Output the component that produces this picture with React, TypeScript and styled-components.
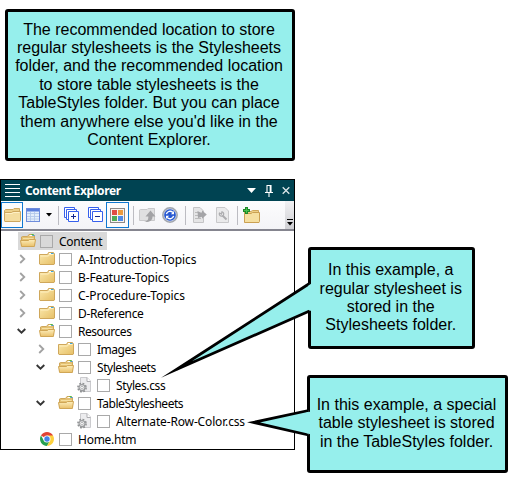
import React from "react";
import styled, { createGlobalStyle } from "styled-components";

const GlobalStyle = createGlobalStyle`
  * { box-sizing: border-box; }
  body { margin: 0; background: #fff; overflow: hidden; }
`;

const Page = styled.main`
  position: relative;
  width: 516px;
  height: 481px;
  padding-top: 179px;
  background: #fff;
`;

/* ---------- Explorer window ---------- */

const Panel = styled.section`
  display: flex;
  flex-direction: column;
  width: 295px;
  height: 271px;
  border: 1px solid #000;
  background: #fff;
  font-family: "Noto Sans", sans-serif;
  font-size: 12px;
  color: #000;
`;

const TitleBar = styled.header`
  display: flex;
  flex: none;
  align-items: center;
  height: 21px;
  padding: 0 4px 0 4px;
  background: #004352;
  color: #fff;
`;

const Title = styled.h1`
  flex: 1;
  margin: 0 0 0 5px;
  font-size: 12px;
  line-height: 20px;
  font-weight: 700;
  letter-spacing: -0.36px;
`;

const TitleControls = styled.div`
  display: flex;
  align-items: center;
  gap: 9px;
`;

const Toolbar = styled.div`
  display: flex;
  flex: none;
  align-items: center;
  height: 30px;
  border-bottom: 2px solid #85858f;
  background: linear-gradient(#fcfcfd, #f4f4f7);
`;

const ToolButton = styled.span<{ $width: number; $active?: boolean }>`
  display: flex;
  flex: none;
  align-items: center;
  justify-content: center;
  width: ${(p) => p.$width}px;
  height: 26px;
  border: ${(p) => (p.$active ? "1px solid #0f78d0" : "0")};
  background: ${(p) => (p.$active ? "#fbfbfc" : "transparent")};
`;

const Separator = styled.i`
  flex: none;
  width: 1px;
  height: 19px;
  background: #bcbcc2;
`;

const Overflow = styled.span`
  display: flex;
  align-items: flex-end;
  justify-content: center;
  width: 9px;
  height: 28px;
  margin-left: auto;
  padding-bottom: 3px;
  background: linear-gradient(#f1f1f3, #cfcfd3);
`;

const Tree = styled.ul`
  flex: 1;
  margin: 0;
  padding: 1px 0 0;
  list-style: none;
`;

const Row = styled.li<{ $level: number }>`
  display: flex;
  height: 18px;
  margin-left: ${(p) => p.$level * 19 - 2}px;
`;

const Arrow = styled.span<{ $open?: boolean }>`
  display: flex;
  align-items: center;
  width: 19px;
  padding-left: ${(p) => (p.$open ? 0 : 1)}px;
  margin-left: ${(p) => (p.$open ? -1 : 0)}px;
  margin-right: ${(p) => (p.$open ? 1 : 0)}px;
`;

const Item = styled.div<{ $selected?: boolean }>`
  display: flex;
  align-items: center;
  padding: 0 5px 0 2px;
  background: ${(p) => (p.$selected ? "#d9d9d9" : "transparent")};
`;

const Checkbox = styled.i<{ $selected?: boolean }>`
  width: 13px;
  height: 13px;
  margin: 1px 6px 0 4px;
  border: 1px solid #a9a9a9;
  background: ${(p) => (p.$selected ? "#d9d9d9" : "#fff")};
`;

const Name = styled.span<{ $tracking: number }>`
  line-height: 17px;
  white-space: nowrap;
  letter-spacing: ${(p) => p.$tracking}px;
`;

/* ---------- Callouts ---------- */

const Callout = styled.aside<{ $x: number; $y: number; $w: number; $h: number }>`
  position: absolute;
  left: ${(p) => p.$x}px;
  top: ${(p) => p.$y}px;
  width: ${(p) => p.$w}px;
  height: ${(p) => p.$h}px;
  display: flex;
  align-items: center;
  justify-content: center;
  padding-right: 1.5px;
  border: 3px solid #000;
  border-radius: 3px;
  background: #96efec;
  color: #000;
  font-family: "Liberation Sans", Arial, sans-serif;
  font-size: 16px;
  line-height: 18.4px;
  text-align: center;
  white-space: pre;
`;

const Tail = styled.svg`
  position: absolute;
  left: 0;
  top: 0;
  pointer-events: none;
`;

/* ---------- Icons ---------- */

const FolderIcon = () => (
  <svg width="16" height="16" viewBox="0 0 16 16">
    <defs>
      <linearGradient id="folderFace" x1="0" y1="0" x2="1" y2="1">
        <stop offset="0" stopColor="#fbe9ad" />
        <stop offset="1" stopColor="#e6bf66" />
      </linearGradient>
    </defs>
    <path d="M.5 3.5H8.5L9.5 1.5H14.5L15.5 3V13L15 13.5H1L.5 13Z" fill="url(#folderFace)" stroke="#cfa75b" />
    <path d="M10 2.5h2" stroke="#fff" />
    <path d="M12 2.5h2.5" stroke="#3fa5dc" />
    <path d="M1.5 5H9.5L10.5 3.5H14.5" fill="none" stroke="#fff0c0" />
  </svg>
);

const OpenFolderIcon = () => (
  <svg width="16" height="16" viewBox="0 0 16 16">
    <defs>
      <linearGradient id="openFace" x1="0" y1="0" x2="0" y2="1">
        <stop offset="0" stopColor="#fdeebc" />
        <stop offset="1" stopColor="#e9c06a" />
      </linearGradient>
    </defs>
    <path d="M1.5 12.5V4L2.5 3.5H7.5L9 1.5H13.5L14.5 3V12Z" fill="#e4c172" stroke="#cfa75b" />
    <path d="M9.5 2.5h2.5" stroke="#fff" />
    <path d="M11.5 1.5h2" stroke="#45c344" />
    <path d="M12.5 2.5h2" stroke="#3c9be0" />
    <path d="M3 5.5h10.5" stroke="#f6dfa0" />
    <path d="M.5 7.5H8.5L9.5 6.5H15.5L14.4 13.5H1.6Z" fill="url(#openFace)" stroke="#d0a655" />
  </svg>
);

const CssFileIcon = () => (
  <svg width="16" height="16" viewBox="0 0 16 16">
    <path d="M3.5.5H10L13.5 4V14.5H3.5Z" fill="#ececee" stroke="#cbcbce" />
    <path d="M10 .5V4.5H13.5" fill="#fff" stroke="#adadb1" />
    <circle cx="5" cy="10.6" r="4.1" fill="none" stroke="#8f9193" strokeWidth="1.6" strokeDasharray="1.8 1.42" />
    <circle cx="5" cy="10.6" r="3" fill="#f0f0f0" stroke="#999b9d" strokeWidth="1.2" />
    <circle cx="5" cy="10.6" r="1.3" fill="#fff" stroke="#a4a6a8" strokeWidth=".8" />
  </svg>
);

const ChromeIcon = () => (
  <svg width="16" height="16" viewBox="0 0 16 16">
    <path d="M8 8 1.94 4.5A7 7 0 0 1 14.06 4.5Z" fill="#e14335" />
    <path d="M8 8 11 9.75 8 15A7 7 0 0 1 1.94 4.5L5 9.8Z" fill="#26a052" />
    <path d="M11.03 9.75 8 15A7 7 0 0 0 14.06 4.5H8Z" fill="#fdd13e" />
    <circle cx="8" cy="8" r="3.5" fill="#fff" />
    <circle cx="8" cy="8" r="2.7" fill="#4483e8" />
  </svg>
);

const ClosedArrow = () => (
  <svg width="7" height="10" viewBox="0 0 7 10">
    <path d="M1.2 1 5.3 5 1.2 9" fill="none" stroke="#a2a2a2" strokeWidth="1.8" />
  </svg>
);

const OpenArrow = () => (
  <svg width="9" height="8" viewBox="0 0 9 8">
    <path d="M.7 2 4.5 5.6 8.3 2" fill="none" stroke="#363636" strokeWidth="1.9" />
  </svg>
);

const MenuIcon = () => (
  <svg width="15" height="14" viewBox="0 0 15 14">
    <path d="M0 .5H15M0 4.5H15M0 8.5H15M0 12.5H15" stroke="#fff" />
  </svg>
);

const ToolFolder = () => (
  <svg width="17" height="14" viewBox="0 0 17 14">
    <path d="M.5 13V2.5L1.5 1.5H9L10 .5H15.5V13.5H1Z" fill="#ecd08a" stroke="#cfa960" />
    <path d="M.5 4.5H7.5L9 3.5H16.5V12.5L16 13.5H1L.5 12.5Z" fill="#f4dda0" stroke="#cda75e" />
    <path d="M1.5 5.5H8L9.5 4.5H15.5" fill="none" stroke="#fff1c7" />
  </svg>
);

const TableIcon = () => (
  <svg width="14" height="14" viewBox="0 0 14 14">
    <rect x=".5" y=".5" width="13" height="13" fill="#e3eefb" stroke="#6e8cdb" />
    <path d="M1 2.2H13" stroke="#5a7fdc" strokeWidth="2.6" />
    <path d="M1 5.5H13M1 8.5H13M1 11H13M4.5 4V13M8.5 4V13" stroke="#b3c8ea" strokeWidth=".9" />
  </svg>
);

const DownArrow = ({ color, size }: { color: string; size: number }) => (
  <svg width={size} height={size / 2 + 0.5} viewBox="0 0 8 4.5">
    <path d="M0 0H8L4 4.5Z" fill={color} />
  </svg>
);

const StackIcon = ({ plus }: { plus?: boolean }) => (
  <svg width="15" height="16" viewBox="0 0 15 16">
    <g stroke="#3660ec" fill="#fff">
      <path d="M.5.5H10.5V10.5H.5Z" />
      <path d="M2.5 2.5H12.5V12.5H2.5Z" />
      <path d="M4.5 4.5H14.5V14.5H4.5Z" />
    </g>
    <path d={plus ? "M7 9.5H12M9.5 7V12" : "M7 9.5H12"} stroke="#12278f" />
  </svg>
);

const ColorsIcon = () => (
  <svg width="15" height="15" viewBox="0 0 15 15">
    <rect x=".5" y=".5" width="14" height="14" fill="#f7f3f1" stroke="#8d8988" />
    <rect x="2" y="2" width="5" height="5" fill="#df4c44" />
    <rect x="8" y="2" width="5" height="5" fill="#ec9a3e" />
    <rect x="2" y="8" width="5" height="5" fill="#4fab57" />
    <rect x="8" y="8" width="5" height="5" fill="#4f8be8" />
  </svg>
);

const FolderUpIcon = () => (
  <svg width="17" height="16" viewBox="0 0 17 16">
    <path d="M.5 13.5V3L1.5 2.5H8L9 1.5H15.5V13.5Z" fill="#e0e0e1" stroke="#c9c9cb" />
    <path d="M5 15C8.5 14.5 9.5 12.5 9.3 9.5H6.5L11.5 3.5 16.5 9.5H13.5C13.5 13.5 10.5 15.5 5 15Z" fill="#a3a3a6" />
  </svg>
);

const RefreshIcon = () => (
  <svg width="16" height="16" viewBox="0 0 16 16">
    <circle cx="8" cy="8" r="7.2" fill="#c8d2e8" stroke="#a2a6ae" strokeWidth="1.5" />
    <circle cx="8" cy="8" r="5.8" fill="#2758d2" />
    <path d="M4.4 7.2A3.8 3.8 0 0 1 10.8 5.4M11.6 8.8A3.8 3.8 0 0 1 5.2 10.6" fill="none" stroke="#fff" strokeWidth="1.4" />
    <path d="M12 4V7.2H8.9ZM4 12V8.8H7.1Z" fill="#fff" />
  </svg>
);

const PageArrowIcon = () => (
  <svg width="15" height="16" viewBox="0 0 15 16">
    <path d="M1.5.5H8L11.5 4V15.5H1.5Z" fill="#e5e5e6" stroke="#c4c4c6" />
    <path d="M3 5.5H6M3 8.5H6M3 11.5H9" stroke="#bbb" />
    <path d="M5.5 4 8.5 5.5H10V3.5L14.8 7.5 10 11.8V9.8L6 11Z" fill="#a5a5a8" />
  </svg>
);

const PageToolIcon = () => (
  <svg width="13" height="16" viewBox="0 0 13 16">
    <path d="M.5.5H9L12.5 4V15.5H.5Z" fill="#eaeaeb" stroke="#c8c8ca" />
    <path d="M3.5 6A2.2 2.2 0 1 0 6 4.8L5.5 7Z" fill="#eaeaeb" stroke="#acacaf" strokeWidth="1.2" />
    <path d="M6.5 8.5 10.5 12.5" stroke="#acacaf" strokeWidth="2" />
  </svg>
);

const NewFolderIcon = () => (
  <svg width="17" height="16" viewBox="0 0 17 16">
    <path d="M1.5 15V4.5H8L9.5 3.5H15.5V15Z" fill="#edd087" stroke="#cfa75b" />
    <path d="M1.5 6.5H8L9.5 5.5H16.5V14.5L16 15.5H1.5Z" fill="#f5dfa0" stroke="#caa052" />
    <path d="M3.5 0V7M0 3.5H7" stroke="#1e8a28" strokeWidth="3" />
    <path d="M3.5 1V6M1 3.5H6" stroke="#49c04c" strokeWidth="1" />
  </svg>
);

/* ---------- Data ---------- */

type Kind = "folder" | "open" | "css" | "html";
interface Entry {
  name: string;
  level: number;
  kind: Kind;
  tracking: number;
  arrow?: "open" | "closed";
  selected?: boolean;
}

const icons: Record<Kind, () => React.JSX.Element> = {
  folder: FolderIcon,
  open: OpenFolderIcon,
  css: CssFileIcon,
  html: ChromeIcon,
};

const entries: Entry[] = [
  { name: "Content", level: 0, kind: "open", tracking: -0.25, selected: true },
  { name: "A-Introduction-Topics", level: 1, kind: "folder", tracking: -0.1, arrow: "closed" },
  { name: "B-Feature-Topics", level: 1, kind: "folder", tracking: -0.13, arrow: "closed" },
  { name: "C-Procedure-Topics", level: 1, kind: "folder", tracking: -0.06, arrow: "closed" },
  { name: "D-Reference", level: 1, kind: "folder", tracking: -0.33, arrow: "closed" },
  { name: "Resources", level: 1, kind: "open", tracking: -0.47, arrow: "open" },
  { name: "Images", level: 2, kind: "folder", tracking: -0.5, arrow: "closed" },
  { name: "Stylesheets", level: 2, kind: "open", tracking: -0.45, arrow: "open" },
  { name: "Styles.css", level: 3, kind: "css", tracking: -0.38 },
  { name: "TableStylesheets", level: 2, kind: "open", tracking: -0.45, arrow: "open" },
  { name: "Alternate-Row-Color.css", level: 3, kind: "css", tracking: -0.15 },
  { name: "Home.htm", level: 1, kind: "html", tracking: -0.26 },
];

const intro = `The recommended location to store
regular stylesheets is the Stylesheets
folder, and the recommended location
to store table stylesheets is the
TableStyles folder. But you can place
them anywhere else you'd like in the
Content Explorer.`;

const regularNote = `In this example, a
regular stylesheet is
stored in the
Stylesheets folder.`;

const tableNote = `In this example, a special
table stylesheet is stored
in the TableStyles folder.`;

export default function App() {
  return (
    <Page>
      <GlobalStyle />
      <Panel>
        <TitleBar>
          <MenuIcon />
          <Title>Content Explorer</Title>
          <TitleControls>
            <DownArrow color="#fff" size={9} />
            <svg width="8" height="12" viewBox="0 0 8 12">
              <path d="M2 7V.5H6V7M5.2 1V7M0 7.5H8M4 8V12" fill="none" stroke="#fff" strokeWidth="1.1" />
            </svg>
            <svg width="8" height="9" viewBox="0 0 9 9">
              <path d="M.8.8 8.2 8.2M8.2.8.8 8.2" stroke="#dbe5e8" strokeWidth="1.5" />
            </svg>
          </TitleControls>
        </TitleBar>
        <Toolbar>
          <ToolButton $width={22} $active><ToolFolder /></ToolButton>
          <ToolButton $width={20}><TableIcon /></ToolButton>
          <ToolButton $width={12}><DownArrow color="#000" size={6} /></ToolButton>
          <ToolButton $width={3} />
          <Separator />
          <ToolButton $width={25}><StackIcon plus /></ToolButton>
          <ToolButton $width={22}><StackIcon /></ToolButton>
          <ToolButton $width={23} $active><ColorsIcon /></ToolButton>
          <ToolButton $width={4} />
          <Separator />
          <ToolButton $width={26}><FolderUpIcon /></ToolButton>
          <ToolButton $width={19}><RefreshIcon /></ToolButton>
          <ToolButton $width={6} />
          <Separator />
          <ToolButton $width={26}><PageArrowIcon /></ToolButton>
          <ToolButton $width={21}><PageToolIcon /></ToolButton>
          <ToolButton $width={4} />
          <Separator />
          <ToolButton $width={26}><NewFolderIcon /></ToolButton>
          <Overflow>
            <svg width="6" height="7" viewBox="0 0 6 7">
              <path d="M0 .5H6" stroke="#000" />
              <path d="M0 3H6L3 6.5Z" fill="#000" />
            </svg>
          </Overflow>
        </Toolbar>
        <Tree>
          {entries.map((e) => {
            const Icon = icons[e.kind];
            return (
              <Row key={e.name} $level={e.level}>
                <Arrow $open={e.arrow === "open"}>
                  {e.arrow === "closed" && <ClosedArrow />}
                  {e.arrow === "open" && <OpenArrow />}
                </Arrow>
                <Item $selected={e.selected}>
                  <Icon />
                  <Checkbox $selected={e.selected} />
                  <Name $tracking={e.tracking}>{e.name}</Name>
                </Item>
              </Row>
            );
          })}
        </Tree>
      </Panel>

      <Callout $x={5} $y={9} $w={289.5} $h={152}>{intro}</Callout>
      <Callout $x={308} $y={247} $w={167} $h={102}>{regularNote}</Callout>
      <Callout $x={307} $y={374.5} $w={200.5} $h={98}>{tableNote}</Callout>
      <Tail width="516" height="481" viewBox="0 0 516 481">
        <g fill="#96efec" stroke="#000" strokeWidth="2.8" strokeMiterlimit="30">
          <path d="M309.5 283.5 176.5 369.5 309.5 311" />
          <path d="M308.5 410.5 253.5 422.4 308.5 435" />
        </g>
        <g fill="#96efec">
          <path d="M308 286 312 283V311.5L308 309.5Z" />
          <path d="M306.5 412.5 311 411.5V434.5L306.5 433Z" />
        </g>
      </Tail>
    </Page>
  );
}
